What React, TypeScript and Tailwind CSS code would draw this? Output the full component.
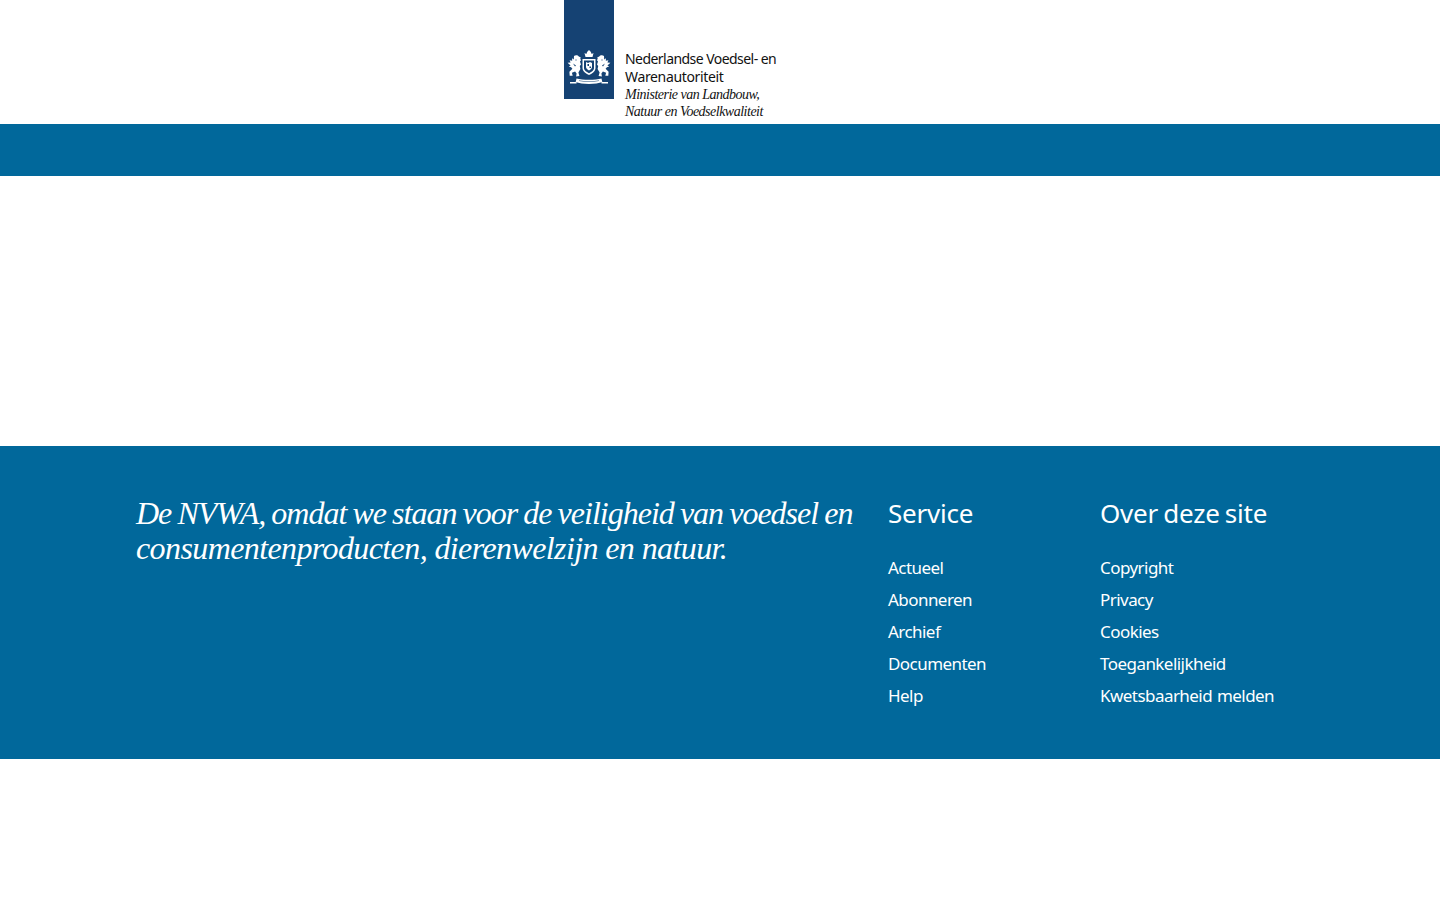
export default function App() {
  const service = ["Actueel", "Abonneren", "Archief", "Documenten", "Help"];
  const over = ["Copyright", "Privacy", "Cookies", "Toegankelijkheid", "Kwetsbaarheid melden"];
  return (
    <div className="min-h-[900px] bg-white">
      <header className="flex h-[124px] justify-center">
        <div className="flex w-[312px] items-start gap-[11px]">
          <div className="flex h-[99px] w-[50px] items-end justify-center bg-[#154273] pb-[13px]">
            <svg width="44" height="36" viewBox="0 0 44 36" fill="#fff">
              <path d="M18.500 7h7l1-4-1.800 1-1-2.200L22 0l-1.700 1.800-1 2.200-1.800-1z" />
              <path d="M15.500 9h13v9c0 3.500-4 6-6.500 7-2.500-1-6.500-3.500-6.500-7z" />
              <path d="M17 10.500h10v7.500c0 2.500-3 4.300-5 5.200-2-.9-5-2.700-5-5.200z" fill="#154273" />
              <path d="M19 12l2 1 2-1 2 1v4c0 1.500-1.500 2.500-3 3.500-1.500-1-3-2-3-3.500z" />
              <path d="M20.500 14h1.500v2h-1.500zM22.500 16.500H24v1.500h-1.500z" fill="#154273" />
              <path d="M7 6c1.600-1.200 4-.8 4.800.6l2 .9-.6 1.500 1 1-1.200 1.500 1 3-1.200 1.500.6 3-2 3.500 1 3.500-3.300.5.500-3-1.500-2-3.200 1.300.8 2.900-3 .1-.3-4 3-3-1.300-1.500-2.300-.7 1.800-1.200-3-2.600 3-.3-1-2.200 2.600.5-.2-2.600 1.800 1.200z" />
              <path d="M37 6c-1.600-1.200-4-.8-4.800.6l-2 .9.6 1.500-1 1 1.200 1.500-1 3 1.200 1.500-.6 3 2 3.500-1 3.500 3.300.5-.5-3 1.500-2 3.200 1.300-.8 2.900 3 .1.300-4-3-3 1.300-1.500 2.300-.7-1.800-1.200 3-2.600-3-.3 1-2.200-2.600.5.200-2.600-1.800 1.200z" />
              <path d="M8.500 9.500h1v1h-1zM34.500 9.500h1v1h-1zM6 13.500l3 2-1 1zM38 13.500l-3 2 1 1z" fill="#154273" />
              <path d="M9.500 28.500c6 1.800 19 1.800 25 0l.8 3.500c-6 2.500-20.600 2.500-26.600 0z" />
              <path d="M12 30.500c5 1 15 1 20 0v.5c-5 1-15 1-20 0z" fill="#154273" />
              <path d="M3 32h6.500v1.500H3zM34.500 32H41v1.500h-6.500z" />
            </svg>
          </div>
          <div className="pt-[50px] font-['Noto_Sans',sans-serif] text-[14px] leading-[18px] text-[#111]">
            <div className="whitespace-nowrap tracking-[-0.55px]">Nederlandse Voedsel- en</div>
            <div className="tracking-[-0.35px]">Warenautoriteit</div>
            <div className="whitespace-nowrap font-['Liberation_Serif',serif] text-[14px] italic leading-[17px] tracking-[-0.5px]">
              Ministerie van Landbouw,
            </div>
            <div className="whitespace-nowrap font-['Liberation_Serif',serif] text-[14px] italic leading-[17px] tracking-[-0.5px]">
              Natuur en Voedselkwaliteit
            </div>
          </div>
        </div>
      </header>
      <div className="h-[52px] bg-[#01689b]" />
      <div className="h-[270px]" />
      <footer className="flex h-[313px] bg-[#01689b] pl-[136px] pt-[50px] text-white">
        <p className="w-[752px] whitespace-nowrap font-['Liberation_Serif',serif] text-[32px] italic leading-[35px]">
          <span className="block tracking-[-1px] [word-spacing:-0.9px]">De NVWA, omdat we staan voor de veiligheid van voedsel en</span>
          <span className="block tracking-[-0.6px]">consumentenproducten, dierenwelzijn en natuur.</span>
        </p>
        <FooterColumn title="Service" links={service} />
        <FooterColumn title="Over deze site" links={over} />
      </footer>
    </div>
  );
}

function FooterColumn({ title, links }: { title: string; links: string[] }) {
  return (
    <div className="-mt-[2px] w-[212px] font-['Noto_Sans',sans-serif]">
      <h2 className="mb-[20px] h-[38px] text-[26px] font-normal leading-[38px] tracking-[-0.2px] [word-spacing:-1.5px]">{title}</h2>
      <ul className="text-[17px] leading-[32px] tracking-[-0.55px] [word-spacing:1px]">
        {links.map((l) => (
          <li key={l} className="whitespace-nowrap">{l}</li>
        ))}
      </ul>
    </div>
  );
}
